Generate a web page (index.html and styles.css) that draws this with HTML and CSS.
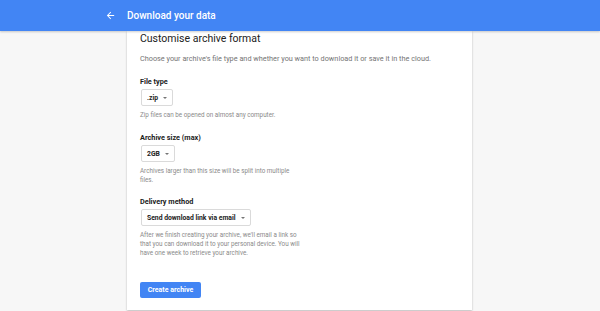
FILE: index.html
```html
<!DOCTYPE html>
<html>
<head>
<meta charset="utf-8">
<link rel="stylesheet" href="styles.css">
</head>
<body>
<header class="topbar">
  <div class="topbar-inner">
    <svg class="back" width="11" height="11" viewBox="0 0 24 24"><path d="M20 11H7.83l5.59-5.59L12 4l-8 8 8 8 1.41-1.41L7.83 13H20v-2z" fill="#fff"/></svg>
    <span class="topbar-title">Download your data</span>
  </div>
</header>
<main class="page">
  <section class="card">
    <h1 class="card-title">Customise archive format</h1>
    <p class="intro">Choose your archive's file type and whether you want to download it or save it in the cloud.</p>

    <div class="field">
      <div class="label">File type</div>
      <div class="select"><span>.zip</span><span class="caret"></span></div>
      <p class="help">Zip files can be opened on almost any computer.</p>
    </div>

    <div class="field">
      <div class="label">Archive size (max)</div>
      <div class="select"><span>2GB</span><span class="caret"></span></div>
      <p class="help">Archives larger than this size will be split into multiple files.</p>
    </div>

    <div class="field field-last">
      <div class="label">Delivery method</div>
      <div class="select"><span>Send download link via email</span><span class="caret"></span></div>
      <p class="help">After we finish creating your archive, we'll email a link so that you can download it to your personal device. You will have one week to retrieve your archive.</p>
    </div>

    <button class="primary">Create archive</button>
  </section>
</main>
</body>
</html>
```
FILE: styles.css
```css
html, body {
  margin: 0;
  padding: 0;
  background: #f7f7f7;
  font-family: Roboto, "Liberation Sans", sans-serif;
  height: 311px;
  overflow: hidden;
}
.topbar {
  height: 31px;
  background: #4285f4;
  box-shadow: 0 1px 2px rgba(0,0,0,0.2);
  position: relative;
  z-index: 1;
}
.topbar-inner {
  display: flex;
  align-items: center;
  height: 31px;
  padding-left: 105px;
}
.back {
  margin-right: 11px;
}
.topbar-title {
  color: #fff;
  font-size: 10px;
  font-weight: 500;
}
.page {
  display: flex;
  padding-left: 127px;
}
.card {
  width: 332px;
  height: 279px;
  background: #fff;
  padding: 0 0 0 13px;
  box-shadow: 0 1px 2px rgba(0,0,0,0.25);
}
.card-title {
  margin: 0;
  padding-top: 1px;
  font-size: 10.5px;
  font-weight: 400;
  color: #212121;
  line-height: 14px;
}
.intro {
  margin: 8px 0 0;
  font-size: 7.3px;
  color: #757575;
  line-height: 10px;
}
.field {
  margin-top: 13px;
}
.field-last {
  margin-top: 12px;
}
.label {
  font-size: 7.3px;
  font-weight: 700;
  color: #212121;
  line-height: 10px;
}
.select {
  display: flex;
  width: max-content;
  box-sizing: border-box;
  align-items: center;
  justify-content: space-between;
  margin-top: 2px;
  margin-left: 1px;
  height: 17px;
  padding: 0 5px;
  border: 1px solid #dadada;
  border-radius: 2px;
  font-size: 6.8px;
  font-weight: 700;
  color: #212121;
  gap: 5px;
}
.caret {
  width: 0;
  height: 0;
  border-left: 2px solid transparent;
  border-right: 2px solid transparent;
  border-top: 2px solid #757575;
}
.help {
  margin: 5px 0 0;
  width: 160px;
  font-size: 6.3px;
  line-height: 9px;
  color: #8a8a8a;
}
.primary {
  display: block;
  margin-top: 24px;
  height: 16px;
  width: 61px;
  padding: 0;
  border: none;
  border-radius: 2px;
  background: #4285f4;
  color: #fff;
  font-family: Roboto, "Liberation Sans", sans-serif;
  font-size: 7px;
  font-weight: 700;
}
```
